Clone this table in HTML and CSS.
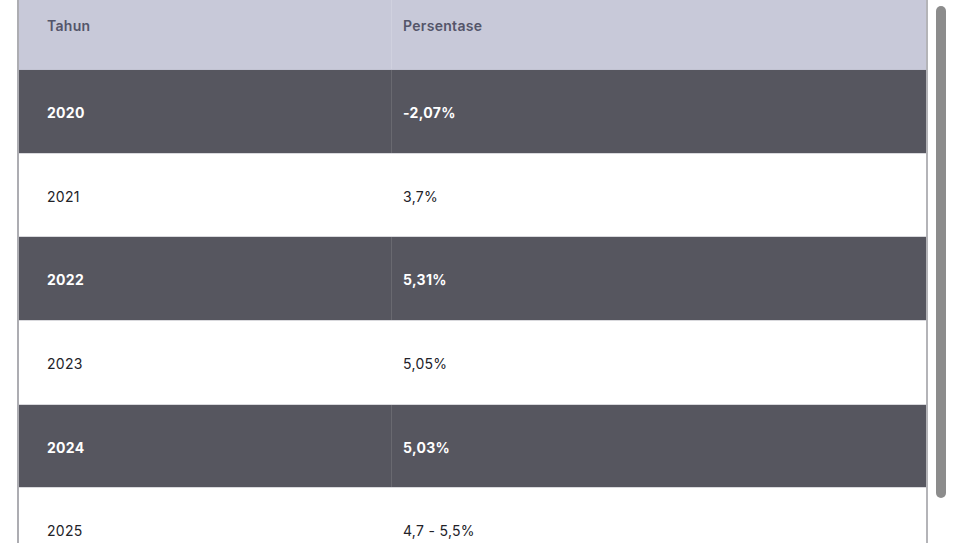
FILE: index.html
```html
<!DOCTYPE html>
<html lang="id">
<head>
<meta charset="utf-8">
<link rel="stylesheet" href="styles.css">
</head>
<body>
<div class="page">
  <div class="table">
    <div class="row head">
      <div class="cell c1">Tahun</div>
      <div class="cell c2">Persentase</div>
    </div>
    <div class="row dark">
      <div class="cell c1">2020</div>
      <div class="cell c2">-2,07%</div>
    </div>
    <div class="row light">
      <div class="cell c1">2021</div>
      <div class="cell c2">3,7%</div>
    </div>
    <div class="row dark">
      <div class="cell c1">2022</div>
      <div class="cell c2">5,31%</div>
    </div>
    <div class="row light">
      <div class="cell c1">2023</div>
      <div class="cell c2">5,05%</div>
    </div>
    <div class="row dark">
      <div class="cell c1">2024</div>
      <div class="cell c2">5,03%</div>
    </div>
    <div class="row light">
      <div class="cell c1">2025</div>
      <div class="cell c2">4,7 - 5,5%</div>
    </div>
  </div>
  <div class="track"><div class="thumb"></div></div>
</div>
</body>
</html>
```
FILE: styles.css
```css
html, body {
  margin: 0;
  padding: 0;
  background: #ffffff;
  overflow: hidden;
}
body {
  font-family: "Inter", "Lato", sans-serif;
  font-size: 14px;
  letter-spacing: 0.3px;
}
.page {
  display: flex;
  height: 543px;
  padding-left: 17px;
  overflow: hidden;
}
.table {
  width: 907px;
  border-left: 2px solid #adadb2;
  border-right: 2px solid #b4b4b8;
  display: flex;
  flex-direction: column;
  flex: none;
}
.row {
  display: flex;
  height: 83.7px;
  box-sizing: border-box;
  border-bottom: 1px solid #d9d9dd;
  flex: none;
}
.cell {
  display: flex;
  align-items: center;
  box-sizing: border-box;
  padding-left: 28px;
  padding-top: 2px;
}
.c1 {
  width: 373px;
  border-right: 1px solid transparent;
}
.c2 {
  flex: 1;
  padding-left: 11px;
}
.head {
  height: 70px;
  background: #c8c9d9;
  color: #54556a;
  font-weight: 600;
  border-bottom: 1px solid #c2c3d2;
}
.head .cell {
  align-items: flex-start;
  padding-top: 17px;
}
.head .c1 {
  border-right-color: #d0d1df;
}
.dark {
  background: #56565f;
  color: #ffffff;
  font-weight: 700;
}
.dark .c1 {
  border-right-color: #696970;
}
.light {
  background: #ffffff;
  color: #222228;
}
.track {
  margin-left: 8px;
  padding-top: 6px;
}
.thumb {
  width: 10px;
  height: 492px;
  border-radius: 5px;
  background: #8c8c8c;
}
```
